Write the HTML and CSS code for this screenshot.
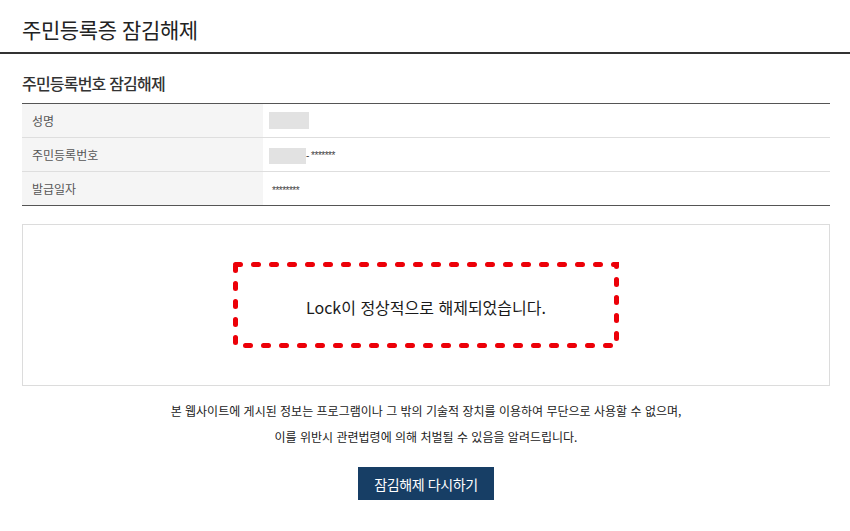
FILE: index.html
```html
<!DOCTYPE html>
<html lang="ko">
<head>
    <meta charset="UTF-8">
    <title>주민등록증 잠김해제</title>
    <link rel="stylesheet" href="styles.css">
</head>
<body>

    <h1 class="page-title">주민등록증 잠김해제</h1>

    <div class="content">
        <h2 class="sub-title">주민등록번호 잠김해제</h2>

        <table class="info-table">
            <tr>
                <th>성명</th>
                <td><span class="mask mask-name"></span></td>
            </tr>
            <tr>
                <th>주민등록번호</th>
                <td><span class="mask mask-no"></span><span class="stars">- *******</span></td>
            </tr>
            <tr>
                <th>발급일자</th>
                <td><span class="stars date">********</span></td>
            </tr>
        </table>

        <div class="result-box">
            <div class="result-msg">
                <!-- red dotted frame -->
                <svg class="dot-frame" width="386" height="86" viewBox="0 0 386 86">
                    <rect x="2.5" y="2.5" width="381" height="81" fill="none" stroke="#ec0008"
                          stroke-width="5" stroke-linecap="round" stroke-dasharray="5 13"/>
                </svg>
                <p>Lock이 정상적으로 해제되었습니다.</p>
            </div>
        </div>

        <p class="notice">본 웹사이트에 게시된 정보는 프로그램이나 그 밖의 기술적 장치를 이용하여 무단으로 사용할 수 없으며,<br>
            이를 위반시 관련법령에 의해 처벌될 수 있음을 알려드립니다.</p>

        <div class="btn-area">
            <button class="btn">잠김해제 다시하기</button>
        </div>
    </div>

</body>
</html>
```

FILE: styles.css
```css
body {
    margin: 0;
    font-family: "Noto Sans CJK KR", "Noto Sans", sans-serif;
    color: #222;
    background: #fff;
}

.page-title {
    margin: 0;
    padding: 14px 0 8px 22px;
    font-size: 21px;
    font-weight: 400;
    line-height: 30px;
    letter-spacing: -0.4px;
    color: #222;
    border-bottom: 2px solid #333;
}

.content {
    width: 808px;
    margin-left: 22px;
}

.sub-title {
    margin: 18px 0 9px;
    font-size: 16px;
    font-weight: 500;
    line-height: 22px;
    letter-spacing: -0.8px;
    color: #333;
}

.info-table {
    width: 100%;
    border-collapse: collapse;
    border-top: 1px solid #555;
    border-bottom: 1px solid #555;
}

.info-table th,
.info-table td {
    height: 33px;
    padding: 0;
    border-top: 1px solid #dedede;
    font-size: 12px;
    font-weight: 400;
    text-align: left;
    vertical-align: middle;
}

.info-table tr:first-child th,
.info-table tr:first-child td {
    border-top: none;
}

.info-table th {
    width: 231px;
    padding-left: 10px;
    background: #f5f5f5;
    color: #555;
}

.info-table td {
    padding-left: 6px;
}

.mask {
    display: inline-block;
    height: 17px;
    background: #e2e2e2;
    vertical-align: middle;
}

.mask-name {
    width: 40px;
    margin-top: -4px;
}

.mask-no {
    width: 37px;
    height: 16px;
}

.stars {
    font-family: "Liberation Sans", sans-serif;
    font-size: 10px;
    letter-spacing: -0.5px;
    color: #444;
    vertical-align: middle;
}

.stars.date {
    padding-left: 3px;
}

.result-box {
    margin-top: 18px;
    height: 160px;
    border: 1px solid #dcdcdc;
    display: flex;
    align-items: center;
    justify-content: center;
}

.result-msg {
    position: relative;
    width: 386px;
    height: 86px;
    display: flex;
    align-items: center;
    justify-content: center;
}

.dot-frame {
    position: absolute;
    top: 0;
    left: 0;
}

.result-msg p {
    margin: 3px 0 0;
    font-size: 16px;
    letter-spacing: 0;
    color: #1a1a1a;
}

.notice {
    margin: 12px 0 0;
    font-size: 12px;
    line-height: 26px;
    letter-spacing: 0;
    text-align: center;
    color: #222;
}

.btn-area {
    margin-top: 17px;
    text-align: center;
}

.btn {
    width: 136px;
    height: 33px;
    border: none;
    background: #173e65;
    color: #fff;
    font-family: inherit;
    font-size: 14px;
    letter-spacing: -0.4px;
    cursor: pointer;
}
```
